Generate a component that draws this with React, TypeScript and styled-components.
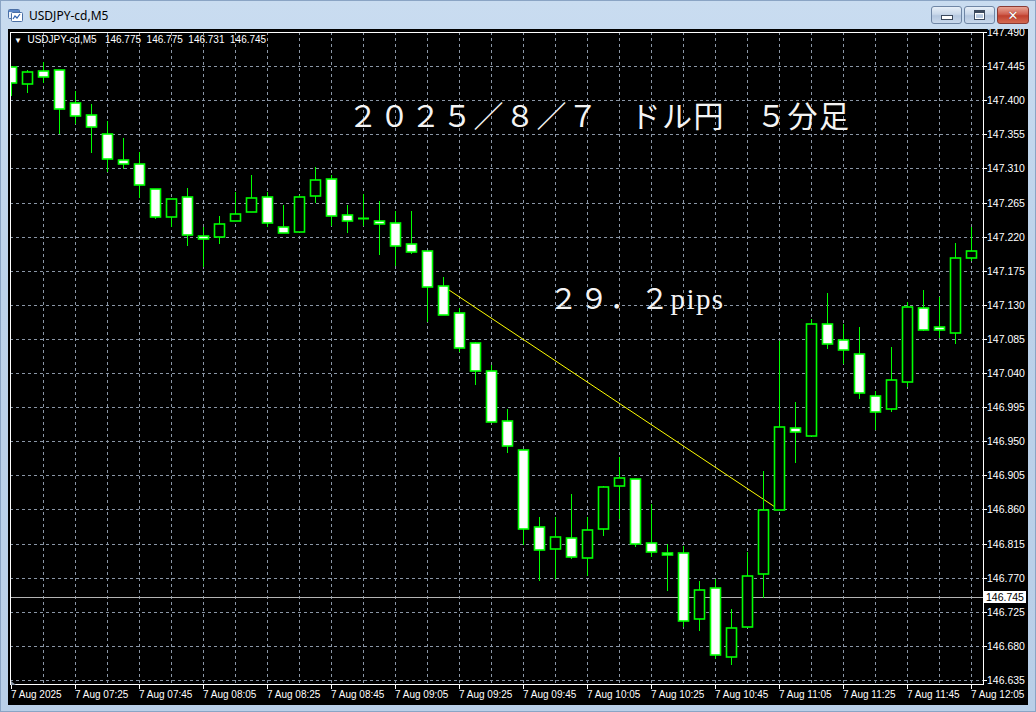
import React from "react";
import styled, { createGlobalStyle } from "styled-components";

const Global = createGlobalStyle`
  html, body { margin: 0; padding: 0; }
  body { width: 1036px; height: 712px; overflow: hidden; font-family: "Liberation Sans", Arial, sans-serif; }
`;

const Window = styled.div`
  width: 1036px;
  height: 712px;
  display: flex;
  flex-direction: column;
  background: linear-gradient(180deg, #c9dcf0 0%, #bcd2ea 40%, #b9cfe8 100%);
  box-sizing: border-box;
  border: 1px solid #8aa4c4;
`;

const TitleBar = styled.div`
  height: 28px;
  display: flex;
  align-items: center;
  padding: 0 6px 0 7px;
  gap: 6px;
  flex-shrink: 0;
`;

const Title = styled.span`
  font-family: "Noto Sans", "DejaVu Sans", sans-serif;
  font-size: 12px;
  color: #000;
  flex: 1;
`;

const Buttons = styled.div`
  display: flex;
  gap: 2px;
  align-self: flex-start;
  margin-top: 5px;
`;

const WinButton = styled.div<{ $close?: boolean }>`
  width: ${(p) => (p.$close ? 32 : 31)}px;
  height: 18px;
  box-sizing: border-box;
  border: 1px solid ${(p) => (p.$close ? "#8a3b35" : "#6f86a5")};
  border-radius: 3px;
  background: ${(p) =>
    p.$close
      ? "linear-gradient(180deg,#e8a595 0%,#d06050 45%,#c0402e 55%,#d36a52 100%)"
      : "linear-gradient(180deg,#e7eff8 0%,#c9d8ea 45%,#b4c7df 55%,#c9d9ec 100%)"};
  display: flex;
  align-items: center;
  justify-content: center;
`;

const MinGlyph = styled.div`
  width: 10px;
  height: 3px;
  margin-top: 5px;
  background: #fff;
  border: 1px solid #3c4a5e;
`;

const MaxGlyph = styled.div`
  width: 9px;
  height: 6px;
  background: transparent;
  border: 1px solid #3c4a5e;
  border-top-width: 3px;
  box-shadow: inset 0 0 0 1px #fff;
`;

const CloseGlyph = styled.span`
  color: #fff;
  font-family: "DejaVu Sans", sans-serif;
  font-weight: bold;
  font-size: 13px;
  line-height: 1;
  text-shadow: 0 0 1px #5a1a10;
`;

const ChartFrame = styled.div`
  position: relative;
  margin-left: 7px;
  width: 1020px;
  height: 676px;
  background: #000;
  flex-shrink: 0;
`;

const Overlay = styled.span<{ $size: number }>`
  position: absolute;
  font-family: "Liberation Serif", "Noto Sans CJK JP", serif;
  font-size: ${(p) => p.$size}px;
  color: #f4f4f4;
  line-height: 1;
  white-space: nowrap;
  letter-spacing: 1.4px;
`;

// [top, bottom, high, low, type] in page pixels; W=bear(white), B=bull(hollow), D=doji
const candles: [number, number, number, number, string][] = [
  [67, 83, 66, 96, "W"], [72, 84, 70, 93, "B"], [71, 77, 62, 83, "W"], [70, 109, 70, 134, "W"],
  [103, 116, 91, 124, "W"], [115, 127, 104, 153, "W"], [134, 159, 121, 172, "W"], [160, 164, 138, 169, "W"],
  [164, 185, 152, 198, "W"], [189, 217, 189, 219, "W"], [199, 217, 199, 227, "B"], [197, 235, 188, 246, "W"],
  [236, 239, 227, 267, "W"], [224, 237, 216, 244, "B"], [214, 221, 192, 221, "B"], [198, 212, 175, 212, "B"],
  [197, 223, 192, 227, "W"], [227, 233, 205, 233, "W"], [197, 232, 195, 232, "B"], [180, 196, 167, 203, "B"],
  [179, 216, 175, 226, "W"], [215, 221, 205, 233, "W"], [218, 218, 194, 226, "D"], [221, 224, 201, 255, "W"],
  [223, 246, 211, 266, "W"], [244, 252, 211, 254, "W"], [251, 287, 251, 322, "W"], [286, 315, 277, 315, "W"],
  [313, 348, 308, 352, "W"], [343, 371, 342, 385, "W"], [371, 422, 365, 423, "W"], [421, 446, 409, 453, "W"],
  [450, 529, 450, 545, "W"], [527, 550, 517, 581, "W"], [537, 549, 517, 579, "B"], [538, 557, 494, 559, "W"],
  [530, 558, 517, 576, "B"], [487, 529, 486, 536, "B"], [478, 486, 457, 519, "B"], [479, 544, 479, 547, "W"],
  [543, 552, 504, 557, "W"], [553, 555, 544, 591, "W"], [553, 621, 546, 627, "W"], [590, 619, 581, 631, "B"],
  [588, 655, 579, 659, "W"], [628, 657, 609, 665, "B"], [576, 627, 552, 627, "B"], [510, 574, 471, 598, "B"],
  [427, 510, 341, 510, "B"], [428, 432, 402, 463, "W"], [324, 436, 319, 436, "B"], [324, 344, 293, 349, "W"],
  [340, 350, 324, 364, "W"], [354, 393, 327, 399, "W"], [396, 412, 391, 430, "W"], [380, 409, 347, 412, "B"],
  [307, 382, 302, 387, "B"], [308, 330, 290, 331, "W"], [327, 330, 297, 338, "W"], [258, 333, 243, 344, "B"],
  [251, 258, 227, 261, "B"],
];

const times = ["2025", "07:25", "07:45", "08:05", "08:25", "08:45", "09:05", "09:25", "09:45", "10:05", "10:25", "10:45", "11:05", "11:25", "11:45", "12:05"];

const L = 10, R = 983, T = 32, B = 684;
const grid = "#8a96a6";
const font = "Liberation Sans, Arial, sans-serif";

function Chart() {
  const hLines = Array.from({ length: 20 }, (_, k) => T + k * 34.1);
  const vLines = Array.from({ length: 31 }, (_, k) => 43 + k * 32).filter((x) => x < R);
  return (
    <svg width={1020} height={676} viewBox="8 29 1020 676" style={{ display: "block" }}>
      <defs>
        <clipPath id="plot">
          <rect x={L} y={T} width={R - L} height={B - T} />
        </clipPath>
      </defs>
      <g stroke={grid} strokeWidth={1} strokeDasharray="3 3" shapeRendering="crispEdges">
        {hLines.slice(1).map((y, i) => (
          <line key={"h" + i} x1={L} x2={R} y1={Math.round(y) + 0.5} y2={Math.round(y) + 0.5} />
        ))}
        {vLines.map((x, i) => (
          <line key={"v" + i} x1={x + 0.5} x2={x + 0.5} y1={T} y2={B} />
        ))}
      </g>
      <line x1={L} x2={R} y1={597.5} y2={597.5} stroke="#b4b4b4" strokeWidth={1} shapeRendering="crispEdges" />
      <line x1={449} y1={290} x2={775} y2={507} stroke="#ffff00" strokeWidth={1} />
      <g clipPath="url(#plot)">
        {candles.map(([top, bot, hi, lo, t], k) => {
          const cx = 11 + 16 * k;
          return (
            <g key={k}>
              <line x1={cx + 0.5} x2={cx + 0.5} y1={hi} y2={lo} stroke="#00ff00" strokeWidth={1} />
              {t === "D" ? (
                <line x1={cx - 5} x2={cx + 6} y1={top + 0.5} y2={top + 0.5} stroke="#00ff00" strokeWidth={2} />
              ) : (
                <rect x={cx - 4.5} y={top} width={10} height={Math.max(bot - top, 2)} fill={t === "W" ? "#fff" : "#000"} stroke="#00ff00" strokeWidth={1.6} />
              )}
            </g>
          );
        })}
      </g>
      <g stroke="#fff" strokeWidth={1} fill="none" shapeRendering="crispEdges">
        <path d={`M${L + 0.5} ${T + 0.5} H${R + 0.5} V${B + 0.5} H${L + 0.5} Z`} />
        {hLines.map((y, i) => (
          <line key={"pt" + i} x1={R} x2={R + 4} y1={Math.round(y) + 0.5} y2={Math.round(y) + 0.5} />
        ))}
        {times.map((_, i) => (
          <line key={"tt" + i} x1={11 + 64 * i + 0.5} x2={11 + 64 * i + 0.5} y1={B} y2={B + 5} />
        ))}
      </g>
      <g fill="#fff" fontFamily={font} fontSize={10.5}>
        {hLines.map((y, i) =>
          Math.abs(Math.round(y) - 597) < 8 ? null : (
            <text key={"p" + i} x={987} y={Math.round(y) + 4}>
              {(147.49 - 0.045 * i).toFixed(3)}
            </text>
          )
        )}
      </g>
      <rect x={984} y={591} width={42} height={12} fill="#fff" />
      <text x={986} y={601} fill="#000" fontFamily={font} fontSize={10.5}>146.745</text>
      <g fill="#fff" fontFamily={font} fontSize={10}>
        {times.map((t, i) => (
          <text key={"t" + i} x={11 + 64 * i} y={698}>{"7 Aug " + t}</text>
        ))}
      </g>
      <text x={14} y={43} fill="#fff" fontFamily={font} fontSize={10} style={{ whiteSpace: "pre" }}>
        <tspan fontSize={8}>▼</tspan>{"  USDJPY-cd,M5   146.775  146.775  146.731  146.745"}
      </text>
      <path d="M11 681 L16 685 L11 685 Z" fill="#8a96a6" />
    </svg>
  );
}

function AppIcon() {
  return (
    <svg width={15} height={15} viewBox="0 0 15 15">
      <rect x={0.5} y={1.5} width={11} height={9} rx={1} fill="#e8f0fa" stroke="#4a6fa5" />
      <rect x={3.5} y={4.5} width={11} height={9} rx={1} fill="#fff" stroke="#4a6fa5" />
      <path d="M5 11 L7 8 L9 10 L12 6" stroke="#2f62b0" fill="none" strokeWidth={1.2} />
      <rect x={1} y={2} width={10} height={2} fill="#5a86c8" />
    </svg>
  );
}

export default function App() {
  return (
    <>
      <Global />
      <Window>
        <TitleBar>
          <AppIcon />
          <Title>USDJPY-cd,M5</Title>
          <Buttons>
            <WinButton><MinGlyph /></WinButton>
            <WinButton><MaxGlyph /></WinButton>
            <WinButton $close><CloseGlyph>✕</CloseGlyph></WinButton>
          </Buttons>
        </TitleBar>
        <ChartFrame>
          <Chart />
          <Overlay $size={30} style={{ left: 340, top: 73 }}>２０２５／８／７　ドル円　５分足</Overlay>
          <Overlay $size={29} style={{ left: 541, top: 256 }}>２９．２pips</Overlay>
        </ChartFrame>
      </Window>
    </>
  );
}
